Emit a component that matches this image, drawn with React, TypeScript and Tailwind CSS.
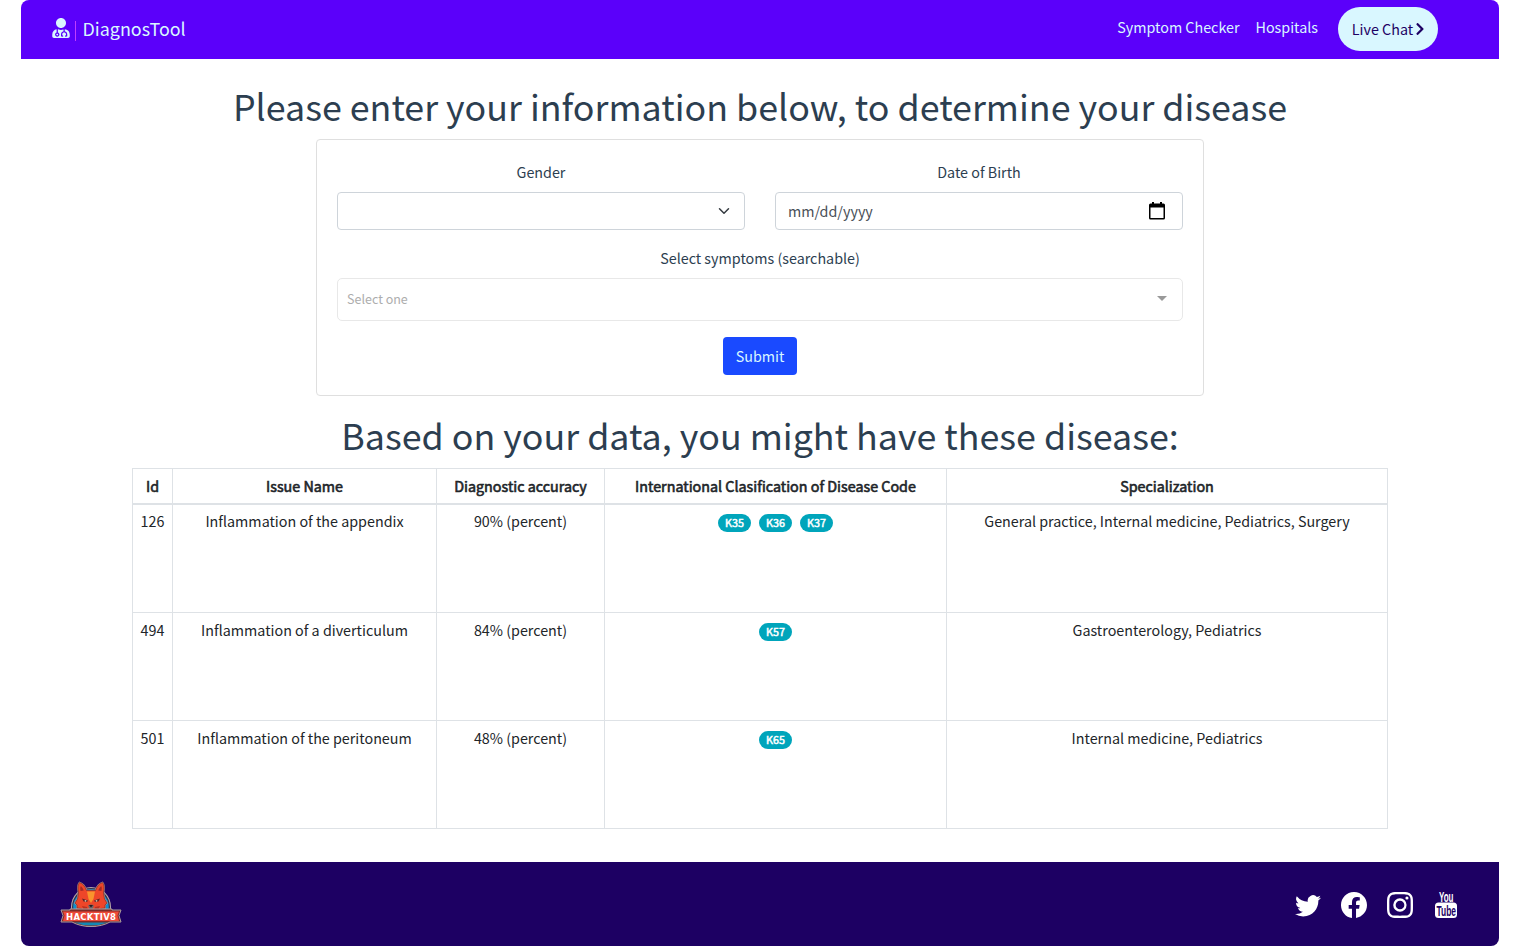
import React from "react";
import { FaUserMd, FaChevronRight } from "react-icons/fa";
import { BsTwitter, BsFacebook, BsInstagram } from "react-icons/bs";

const rows = [
  { id: 126, name: "Inflammation of the appendix", acc: 90, codes: ["K35", "K36", "K37"], spec: "General practice, Internal medicine, Pediatrics, Surgery" },
  { id: 494, name: "Inflammation of a diverticulum", acc: 84, codes: ["K57"], spec: "Gastroenterology, Pediatrics" },
  { id: 501, name: "Inflammation of the peritoneum", acc: 48, codes: ["K65"], spec: "Internal medicine, Pediatrics" },
];

function FoxLogo() {
  return (
    <svg width="62" height="48" viewBox="0 0 62 48">
      <circle cx="31" cy="27" r="20" fill="#b9a9a9" />
      <circle cx="31" cy="27" r="19" fill="#34304a" />
      <circle cx="31" cy="27" r="17.800" fill="#0d8fd0" />
      <path d="M18.500 13 Q17 5 19.500 2.500 Q24.500 4 26.500 10.500 L35.500 10.500 Q37.500 4 42.500 2.500 Q45 5 43.500 13 L44.500 19 L47 23 L45 25 L45 28 L41 28.500 L36 33 H26 L21 28.500 L17 28 L17 25 L15 23 L17.500 19 Z" fill="#ee4629" stroke="#a99595" strokeWidth="1.6" />
      <path d="M18.500 13 Q17 5 19.500 2.500 Q24.500 4 26.500 10.500 L35.500 10.500 Q37.500 4 42.500 2.500 Q45 5 43.500 13 L44.500 19 L47 23 L45 25 L45 28 L41 28.500 L36 33 H26 L21 28.500 L17 28 L17 25 L15 23 L17.500 19 Z" fill="#ee4629" stroke="#7d2d27" strokeWidth="0.7" />
      <path d="M20.500 11 Q19.700 7.500 20.800 6 Q23 8 23.800 10.500 Z M41.500 11 Q42.300 7.500 41.200 6 Q39 8 38.200 10.500 Z" fill="#a12a26" />
      <path d="M27 11.500 L35 11.500 L33.500 19 L31 23 L28.500 19 Z" fill="#f9942d" />
      <path d="M22 18.500 L28 20.500 L27 22 L23.500 21.500 Z M40 18.500 L34 20.500 L35 22 L38.500 21.500 Z" fill="#5a2528" />
      <circle cx="25.500" cy="20.800" r="0.900" fill="#d5c6b0" />
      <circle cx="36.500" cy="20.800" r="0.900" fill="#d5c6b0" />
      <path d="M22 26 L27 27 L28 30 H24 Z M40 26 L35 27 L34 30 H38 Z" fill="#b8301f" />
      <path d="M28 25.500 Q31 23.500 34 25.500 L32.500 29 H29.500 Z" fill="#6f6768" />
      <path d="M29 25 H33 L31 27.500 Z" fill="#2c1a1d" />
      <path d="M1 30 H10 V29 H52 V30 H61 L59 35.500 L61 42 H50 Q42 46.500 31 46.500 Q20 46.500 12 42 H1 L3 35.500 Z" fill="#7e2b28" stroke="#a99c9c" strokeWidth="1" />
      <path d="M14 42.500 H48 Q40 45.500 31 45.500 Q22 45.500 14 42.500 Z" fill="#1389b5" />
      <path d="M3 31.500 H59 L57.500 35.500 L59 41 H3 L4.500 35.500 Z" fill="#ee4a38" />
      <text x="6" y="39.500" textLength="50" lengthAdjust="spacing" fontFamily="DejaVu Sans" fontWeight="700" fontSize="8.500" fill="#fff">HACKTIV8</text>
    </svg>
  );
}

function YouTubeIcon() {
  return (
    <svg width="24" height="32" viewBox="0 0 24 32" className="overflow-visible">
      <text x="5" y="12.500" textLength="14.500" lengthAdjust="spacingAndGlyphs" fontFamily="Liberation Sans Narrow, Liberation Sans" fontWeight="700" fontSize="14" fill="#fff">You</text>
      <rect x="1" y="13.500" width="22" height="15.500" rx="3.500" fill="#fff" />
      <text x="2.500" y="26.500" textLength="19.500" lengthAdjust="spacingAndGlyphs" fontFamily="Liberation Sans Narrow, Liberation Sans" fontWeight="700" fontSize="14.500" fill="#1d0063">Tube</text>
    </svg>
  );
}

export default function App() {
  return (
    <div className="ml-[21px] flex h-[946px] w-[1478px] flex-col bg-white font-['Noto_Sans_CJK_SC',sans-serif] text-[14.32px] leading-6 text-[#2c3e50]">
      <header className="flex h-[59px] shrink-0 items-center justify-between rounded-t-lg bg-[#5b00fa] pr-[61px] pb-px pl-[30px] text-[#d9f7ff]">
        <div className="flex items-center text-[17.9px] leading-[30px]">
          <FaUserMd size={20} className="mb-0.5" />
          <span className="mt-1 ml-1 h-5 w-px bg-[#c03cff]" />
          <span className="mb-0.5 ml-[6.5px]">DiagnosTool</span>
        </div>
        <nav className="flex items-center">
          <a className="mr-4 pb-1">Symptom Checker</a>
          <a className="mr-5 pb-1">Hospitals</a>
          <button className="flex h-11 w-[100px] items-center justify-center rounded-full bg-[#d9f7ff] text-[#1d0063]">
            Live Chat <FaChevronRight size={14} className="-mr-[3px]" />
          </button>
        </nav>
      </header>

      <main className="flex flex-col items-center">
        <h1 className="mt-6 pb-1 text-[35.8px] leading-[44px]">Please enter your information below, to determine your disease</h1>
        <section className="mt-2 flex h-[257px] w-[888px] flex-col rounded border border-[#dfdfdf] px-5 pt-5 text-center">
          <div className="grid grid-cols-2 gap-[30px]">
            <div>
              <div>Gender</div>
              <div className="mt-2 flex h-[38px] items-center justify-end rounded border border-[#ced4da] pr-3">
                <svg width="16" height="12" viewBox="0 0 16 16">
                  <path d="M2 5l6 6 6-6" fill="none" stroke="#343a40" strokeWidth="2" strokeLinecap="round" strokeLinejoin="round" />
                </svg>
              </div>
            </div>
            <div>
              <div>Date of Birth</div>
              <div className="mt-2 flex h-[38px] items-center justify-between rounded border border-[#ced4da] pr-4 pl-3 text-[#495057]">
                <span>mm/dd/yyyy</span>
                <svg width="18" height="18" viewBox="0 0 18 18">
                  <path d="M4 0h2v1.500h6V0h2v1.500h1.500A1.500 1.500 0 0 1 17 3v13a1.500 1.500 0 0 1-1.500 1.500h-13A1.500 1.500 0 0 1 1 16v-13A1.500 1.500 0 0 1 2.500 1.500H4zM2.500 5.500v10.500h13V5.500z" fill="#000" fillRule="evenodd" />
                </svg>
              </div>
            </div>
          </div>
          <div className="mt-4">Select symptoms (searchable)</div>
          <div className="mt-2 flex h-[43px] items-center justify-between rounded-[5px] border border-[#e8e8e8] pr-[15px] pb-px pl-[9px] text-[12.53px] text-[#adadad]">
            <span>Select one</span>
            <span className="mb-0.5 border-x-[5px] border-t-[5px] border-x-transparent border-t-[#999]" />
          </div>
          <button className="mt-4 h-[38px] w-[74px] self-center rounded bg-[#1a4aff] text-[#d9f7ff]">Submit</button>
        </section>

        <h1 className="mt-4 pb-1 text-[35.8px] leading-[44px]">Based on your data, you might have these disease:</h1>
        <table className="mt-2 w-[1256px] table-fixed border-collapse text-center text-[#212529]">
          <colgroup>
            <col className="w-[40px]" />
            <col className="w-[264px]" />
            <col className="w-[168px]" />
            <col className="w-[342px]" />
            <col className="w-[441px]" />
          </colgroup>
          <thead>
            <tr className="h-[35px]">
              {["Id", "Issue Name", "Diagnostic accuracy", "International Clasification of Disease Code", "Specialization"].map((h) => (
                <th key={h} className="border border-b-2 border-[#dee2e6] p-0 font-normal [-webkit-text-stroke:0.6px_#212529]">{h}</th>
              ))}
            </tr>
          </thead>
          <tbody>
            {rows.map((r) => (
              <tr key={r.id} className="group h-[108px] align-top first:h-[109px]">
                <td className="border border-[#dee2e6] pt-[5px] group-first:pt-1">{r.id}</td>
                <td className="border border-[#dee2e6] pt-[5px] group-first:pt-1">{r.name}</td>
                <td className="border border-[#dee2e6] pt-[5px] group-first:pt-1">{r.acc}% (percent)</td>
                <td className="border border-[#dee2e6] pt-2.5 group-first:pt-[9px]">
                  <div className="flex justify-center gap-2">
                    {r.codes.map((c) => (
                      <span key={c} className="flex h-[18px] w-[33px] items-center justify-center rounded-full bg-[#00a5bb] text-[10.74px] text-white [-webkit-text-stroke:0.5px_#fff]">{c}</span>
                    ))}
                  </div>
                </td>
                <td className="border border-[#dee2e6] pt-[5px] group-first:pt-1">{r.spec}</td>
              </tr>
            ))}
          </tbody>
        </table>
      </main>

      <footer className="mt-auto flex h-[84px] shrink-0 items-center justify-between rounded-b-lg bg-[#1d0063] pr-[41px] pl-[39px] text-white">
        <FoxLogo />
        <div className="flex items-center gap-5 pt-0.5">
          <BsTwitter size={26} />
          <BsFacebook size={26} />
          <BsInstagram size={26} />
          <span className="ml-px"><YouTubeIcon /></span>
        </div>
      </footer>
    </div>
  );
}
